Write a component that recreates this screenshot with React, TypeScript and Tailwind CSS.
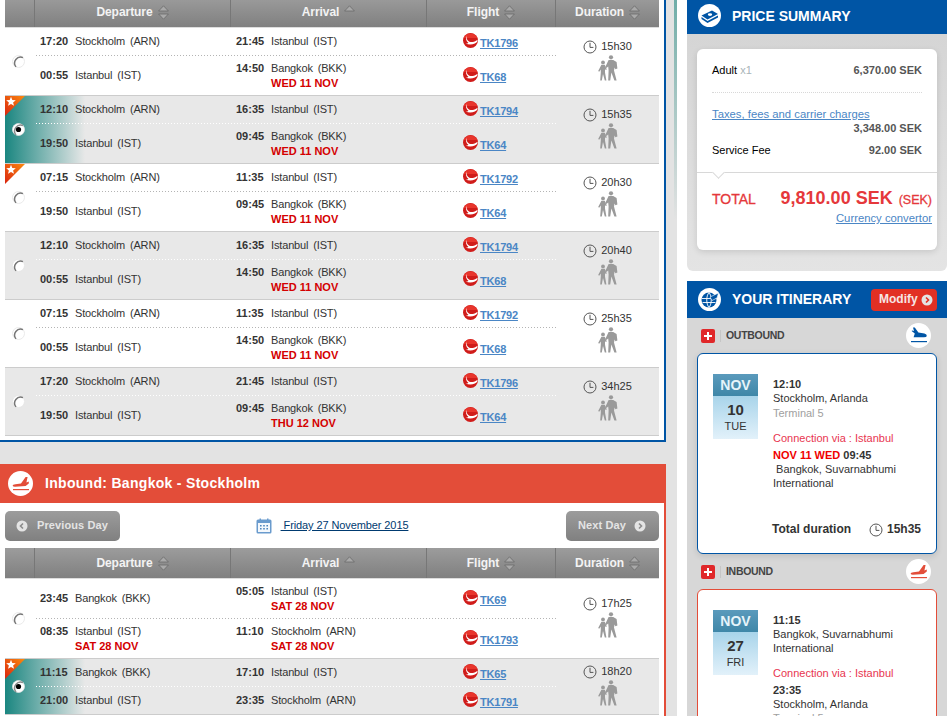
import { Fragment, type ReactNode } from "react";

type Stop = { time: string; city: string; date?: string };
type Leg = { dep: Stop; arr: Stop; flight: string };
type Flight = { legs: [Leg, Leg]; duration: string; star?: boolean; selected?: boolean };

const ARN = "Stockholm (ARN)";
const IST = "Istanbul (IST)";
const BKK = "Bangkok (BKK)";

const leg = (dt: string, dc: string, at: string, ac: string, flight: string, date?: string, depDate?: string): Leg => ({
  dep: { time: dt, city: dc, date: depDate },
  arr: { time: at, city: ac, date },
  flight,
});

const outbound: Flight[] = [
  { legs: [leg("17:20", ARN, "21:45", IST, "TK1796"), leg("00:55", IST, "14:50", BKK, "TK68", "WED 11 NOV")], duration: "15h30" },
  { legs: [leg("12:10", ARN, "16:35", IST, "TK1794"), leg("19:50", IST, "09:45", BKK, "TK64", "WED 11 NOV")], duration: "15h35", star: true, selected: true },
  { legs: [leg("07:15", ARN, "11:35", IST, "TK1792"), leg("19:50", IST, "09:45", BKK, "TK64", "WED 11 NOV")], duration: "20h30", star: true },
  { legs: [leg("12:10", ARN, "16:35", IST, "TK1794"), leg("00:55", IST, "14:50", BKK, "TK68", "WED 11 NOV")], duration: "20h40" },
  { legs: [leg("07:15", ARN, "11:35", IST, "TK1792"), leg("00:55", IST, "14:50", BKK, "TK68", "WED 11 NOV")], duration: "25h35" },
  { legs: [leg("17:20", ARN, "21:45", IST, "TK1796"), leg("19:50", IST, "09:45", BKK, "TK64", "THU 12 NOV")], duration: "34h25" },
];

const inbound: Flight[] = [
  { legs: [leg("23:45", BKK, "05:05", IST, "TK69", "SAT 28 NOV"), leg("08:35", IST, "11:10", ARN, "TK1793", "SAT 28 NOV", "SAT 28 NOV")], duration: "17h25" },
  { legs: [leg("11:15", BKK, "17:10", IST, "TK65"), leg("21:00", IST, "23:35", ARN, "TK1791")], duration: "18h20", star: true, selected: true },
];

function SortIcon({ upOnly }: { upOnly?: boolean }) {
  return (
    <svg width="11" height="15" viewBox="0 0 11 15" className="shrink-0">
      <path d="M5.5 0.8 L10.4 6 H0.6 Z" fill="#a9a9a9" stroke="#6a6a6a" strokeWidth="0.8" />
      {!upOnly && <path d="M5.5 14.2 L10.4 9 H0.6 Z" fill="#a9a9a9" stroke="#6a6a6a" strokeWidth="0.8" />}
    </svg>
  );
}

function TkLogo() {
  return (
    <svg width="15" height="15" viewBox="0 0 15 15" className="mb-[3px] shrink-0">
      <circle cx="7.5" cy="7.5" r="7.5" fill="#d01c1a" />
      <path d="M0.6 5 A7.5 7.5 0 0 1 14.4 5 Z" fill="#e8352c" />
      <path d="M3.6 2.4 C3 6.4 5.4 9.4 9.6 9 C11.4 8.8 13 8 14.6 6.8 C14.6 8.4 13.8 9.8 11.8 10.6 C8.8 11.8 5.6 11.8 2.6 10.6 C3.8 10.6 4.8 10.4 5.4 9.8 C3.2 8.4 2.4 5 3.6 2.4 Z" fill="#ffffff" />
    </svg>
  );
}

function ClockIcon() {
  return (
    <svg width="14" height="14" viewBox="0 0 14 14" className="shrink-0" fill="none" stroke="#555" strokeWidth="1">
      <circle cx="7" cy="7" r="6" />
      <path d="M7 2.8 V7.4 H10.4" />
    </svg>
  );
}

function PeopleIcon() {
  return (
    <svg width="20" height="26" viewBox="0 0 20 26" fill="#9a9a9a" className="mt-[1px]">
      <circle cx="13" cy="2.3" r="2.1" />
      <path d="M10.6 5 H15.2 L18.6 7 L19.4 13.6 L17.4 14.2 L16.6 12.6 L16 15.4 L18.6 25.6 H16.4 L13.4 17.6 L12.2 25.6 H10.2 L10.6 15.4 L10.2 11.4 L8.4 13 L7.4 11.8 Z" />
      <circle cx="5" cy="7.4" r="1.9" />
      <path d="M3.4 9.8 H6.8 L8.8 14.4 L7.6 15 L7 13.8 L7 17.6 L8.4 25.4 H6.8 L5 19 L3.8 25.4 H2.2 L2.8 17.6 L2.8 14.4 L1.2 16.8 L0.2 16 Z" />
    </svg>
  );
}

function StarBadge() {
  return (
    <svg width="21" height="20" viewBox="0 0 21 20" className="absolute left-0 top-0">
      <defs>
        <linearGradient id="badge" x1="0" y1="1" x2="1" y2="0">
          <stop offset="0" stopColor="#d9230f" />
          <stop offset="1" stopColor="#fb8a0e" />
        </linearGradient>
      </defs>
      <path d="M0 0 H20 L0 20 Z" fill="url(#badge)" />
      <path d="M6 0.8 L7.3 4 L10.8 4.2 L8.1 6.4 L9 9.8 L6 7.9 L3 9.8 L3.9 6.4 L1.2 4.2 L4.7 4 Z" fill="#fff" />
    </svg>
  );
}

function Radio({ checked }: { checked?: boolean }) {
  return (
    <svg width="13" height="13" viewBox="0 0 13 13" className="-ml-[3px]">
      <circle cx="6.5" cy="6.5" r="6" fill="#fff" stroke="#e4e4e4" strokeWidth="0.8" />
      <path d="M11 2.6 A6 6 0 0 0 4 11.9" fill="none" stroke={checked ? "#8c8c8c" : "#777"} strokeWidth="1.5" />
      {checked && <circle cx="6.5" cy="6.5" r="2.6" fill="#000" />}
    </svg>
  );
}

function StopCell({ stop }: { stop: Stop }) {
  return (
    <div className="flex items-center pl-[5px]">
      <div className="flex items-start">
        <span className="w-[35px] font-bold text-[#333]">{stop.time}</span>
        <div>
          <div className="tracking-[-0.15px] text-[#333] [word-spacing:2px]">{stop.city}</div>
          {stop.date && <div className="font-bold text-[#d40000]">{stop.date}</div>}
        </div>
      </div>
    </div>
  );
}

function FlightCell({ code }: { code: string }) {
  return (
    <div className="flex items-center gap-[2px] pl-[36px]">
      <TkLogo />
      <a className="mt-[3px] text-[11px] font-bold tracking-[-0.2px] text-[#4a86c5] underline">{code}</a>
    </div>
  );
}

function FlightRow({ flight, odd }: { flight: Flight; odd: boolean }) {
  const [first, second] = flight.legs;
  const firstTall = !!(first.arr.date || first.dep.date);
  const secondTall = !!(second.arr.date || second.dep.date);
  const bg = flight.selected
    ? "bg-[linear-gradient(to_right,#1a8680,#e8e8e8_80px)]"
    : odd
      ? "bg-white"
      : "bg-[#e8e8e8]";
  const dots = odd
    ? "bg-[linear-gradient(to_right,#b4b4b4_1px,transparent_1px)]"
    : "bg-[linear-gradient(to_right,#ffffff_1px,transparent_1px)]";
  return (
    <div className={`relative flex border-b border-[#cccccc] ${bg}`}>
      {flight.star && <StarBadge />}
      <div className="flex w-[30px] items-center justify-center">
        <Radio checked={flight.selected} />
      </div>
      <div className="w-[521px]">
        <div className={`grid grid-cols-[196px_196px_129px] bg-[length:3px_1px] bg-bottom bg-repeat-x pb-[1px] ${dots} ${firstTall ? "h-[40px]" : "h-[28px]"}`}>
          <StopCell stop={first.dep} />
          <StopCell stop={first.arr} />
          <FlightCell code={first.flight} />
        </div>
        <div className={`grid grid-cols-[196px_196px_129px] ${secondTall ? "h-[39px]" : "h-[27px]"}`}>
          <StopCell stop={second.dep} />
          <StopCell stop={second.arr} />
          <FlightCell code={second.flight} />
        </div>
      </div>
      <div className="flex w-[103px] flex-col items-center justify-center pb-[3px]">
        <div className="flex items-center gap-[4px] text-[#333]">
          <ClockIcon />
          <span>{flight.duration}</span>
        </div>
        <PeopleIcon />
      </div>
    </div>
  );
}

function FlightTable({ flights }: { flights: Flight[] }) {
  const heads = [
    { label: "Departure", w: "w-[196px]" },
    { label: "Arrival", w: "w-[196px]", upOnly: true },
    { label: "Flight", w: "w-[129px]" },
    { label: "Duration", w: "w-[103px]", last: true },
  ];
  return (
    <div>
      <div className="flex h-[31px] border-b border-[#dddddd] bg-gradient-to-b from-[#9c9c9c] to-[#808080]">
        <div className="w-[30px] border-r border-[#777]" />
        {heads.map((h) => (
          <div
            key={h.label}
            className={`flex items-center justify-center gap-[5px] ${h.w} ${h.last ? "" : "border-r border-[#777]"}`}
          >
            <span className="text-[12px] font-bold tracking-[-0.05px] text-white/90">{h.label}</span>
            <SortIcon upOnly={h.upOnly} />
          </div>
        ))}
      </div>
      {flights.map((f, i) => (
        <Fragment key={i}>
          <FlightRow flight={f} odd={i % 2 === 0} />
        </Fragment>
      ))}
    </div>
  );
}

function ChevronCircle({ left, color = "#8c8c8c" }: { left?: boolean; color?: string }) {
  return (
    <svg width="12" height="12" viewBox="0 0 12 12" className="shrink-0">
      <circle cx="6" cy="6" r="5.5" fill="#e4e4e4" />
      <path d={left ? "M7 3.5 L4.5 6 L7 8.5" : "M5 3.5 L7.5 6 L5 8.5"} fill="none" stroke={color} strokeWidth="1.6" />
    </svg>
  );
}

function LandIcon({ color, inbound: isInbound }: { color: string; inbound?: boolean }) {
  return (
    <svg width="25" height="25" viewBox="0 0 25 25" className="shrink-0">
      <circle cx="12.5" cy="12.5" r="12.5" fill="#fff" />
      <g fill={color}>
        {isInbound ? (
          <path d="M4.6 14.8 Q4.6 13.4 7.4 13.2 L13 12.6 L17.6 6 H19.6 L18.4 11.4 L20.8 10.6 V12.4 L17.6 15 L7 15.8 Q5 15.8 4.6 14.8 Z" />
        ) : (
          <path d="M7 4.4 H8.8 L12.4 9.4 L18.4 10.6 Q21 11.4 20.8 13 Q20.6 14.2 18 14.2 H7.6 L8.8 10.4 L5.6 8 L6.2 7.4 L8 8 Z" />
        )}
        <rect x="5" y="18" width="16" height="1.2" />
      </g>
    </svg>
  );
}

function CalendarIcon() {
  return (
    <svg width="16" height="16" viewBox="0 0 16 16" className="shrink-0">
      <rect x="0.5" y="1.5" width="15" height="14" rx="1.5" fill="#6a9bcd" />
      <rect x="2" y="5" width="12" height="9" fill="#f4f8fc" />
      <rect x="3.5" y="0.5" width="1.5" height="3" fill="#6a9bcd" />
      <rect x="11" y="0.5" width="1.5" height="3" fill="#6a9bcd" />
      <path d="M4 7 h1.6 v1.4 H4 z M7.2 7 h1.6 v1.4 H7.2 z M10.4 7 h1.6 v1.4 h-1.6 z M4 10 h1.6 v1.4 H4 z M7.2 10 h1.6 v1.4 H7.2 z M10.4 10 h1.6 v1.4 h-1.6 z" fill="#4f86bd" />
    </svg>
  );
}

function MoneyIcon() {
  return (
    <svg width="23" height="23" viewBox="0 0 23 23" className="mb-[4px] shrink-0">
      <circle cx="11.5" cy="11.5" r="11.5" fill="#fff" />
      <path d="M3.5 11.5 L14 6.5 L20 10 L9.5 15.5 Z" fill="#0055a5" />
      <path d="M3.5 13 L9.5 17 L20 11.5 V13.5 L9.5 19 L3.5 15 Z" fill="#0055a5" />
      <ellipse cx="12" cy="10.6" rx="2.2" ry="1.3" fill="#fff" />
    </svg>
  );
}

function GlobeIcon() {
  return (
    <svg width="23" height="23" viewBox="0 0 23 23" className="shrink-0">
      <circle cx="11.5" cy="11.5" r="11.5" fill="#fff" />
      <circle cx="11" cy="12" r="7.5" fill="#0055a5" />
      <path d="M4 10.5 H18 M4.5 14.5 H17.5 M11 4.5 C8 8 8 16 11 19.5 M11 4.5 C14 8 14 16 11 19.5" fill="none" stroke="#fff" strokeWidth="0.9" />
      <path d="M12 9 L20.5 5 L19 10 L14 12.5 Z" fill="#0055a5" stroke="#fff" strokeWidth="0.6" />
    </svg>
  );
}

function PlusButton() {
  return (
    <div className="flex h-[14px] w-[14px] items-center justify-center rounded-[2px] bg-[#e0282a]">
      <svg width="8" height="8" viewBox="0 0 8 8">
        <path d="M3 0 H5 V3 H8 V5 H5 V8 H3 V5 H0 V3 H3 Z" fill="#fff" />
      </svg>
    </div>
  );
}

function BoundRow({ label, icon }: { label: string; icon: ReactNode }) {
  return (
    <div className="-mx-[10px] flex h-[35px] items-center pl-[14px] pr-[16px]">
      <PlusButton />
      <div className="ml-[5px] h-[12px] w-px bg-[#c6c6c6]" />
      <span className="ml-[5px] flex-1 text-[10.5px] font-bold tracking-[-0.3px] text-[#444]">{label}</span>
      {icon}
    </div>
  );
}

function DateTile({ day, weekday }: { day: string; weekday: string }) {
  return (
    <div className="h-[65px] w-[45px] shrink-0 text-center">
      <div className="flex h-[22px] items-center justify-center bg-gradient-to-b from-[#5a9abc] to-[#3f87a8] text-[14px] font-bold text-[#e6f4fa]">
        NOV
      </div>
      <div className="h-[43px] bg-gradient-to-b from-[#a8d4ea] to-[#e2f1fa] pt-[6px] text-[#333]">
        <div className="text-[15px] font-bold leading-[16px]">{day}</div>
        <div className="mt-[1px] text-[11px] leading-[14px]">{weekday}</div>
      </div>
    </div>
  );
}

export default function App() {
  return (
    <div className="flex h-[716px] w-[947px] overflow-hidden bg-white font-['Liberation_Sans',Arial,sans-serif] text-[11px] leading-[15px]">
      {/* left column */}
      <div className="flex w-[666px] shrink-0 flex-col bg-[#e3e3e3]">
        <section className="-mt-[3px] border-b-2 border-r-2 border-[#0055a5] bg-white px-[5px] pb-[4px]">
          <FlightTable flights={outbound} />
        </section>

        <section className="mt-[22px] flex-1 border-r-2 border-[#e34d39] bg-white">
          <div className="flex h-[39px] items-center bg-[#e34d39] pl-[8px]">
            <LandIcon color="#e34d39" inbound />
            <h2 className="ml-[12px] text-[14px] font-bold tracking-[0.3px] text-white">Inbound: Bangkok - Stockholm</h2>
          </div>
          <div className="px-[5px]">
            <div className="flex h-[45px] items-center">
              <button className="flex h-[30px] w-[115px] items-center gap-[9px] rounded-[5px] bg-gradient-to-b from-[#9c9c9c] to-[#808080] pl-[11px] text-[11px] font-bold tracking-[0.1px] text-[#e4e4e4]">
                <ChevronCircle left />
                Previous Day
              </button>
              <div className="flex flex-1 items-center justify-center gap-[9px] pr-[22px]">
                <CalendarIcon />
                <a className="whitespace-pre tracking-[-0.1px] text-[#003a70] underline"> Friday 27 November 2015</a>
              </div>
              <button className="flex h-[30px] w-[93px] items-center justify-between rounded-[5px] bg-gradient-to-b from-[#9c9c9c] to-[#808080] pl-[12px] pr-[13px] text-[11px] font-bold tracking-[0.1px] text-[#e4e4e4]">
                Next Day
                <ChevronCircle />
              </button>
            </div>
            <FlightTable flights={inbound} />
          </div>
        </section>
      </div>

      {/* gutter */}
      <div className="flex w-[11px] shrink-0 bg-[#e3e3e3]">
        <div className="ml-[8px] h-[220px] w-[3px] bg-gradient-to-b from-[#6fada8] to-[#e3e3e3]" />
      </div>
      <div className="w-[10px] shrink-0" />

      {/* right column */}
      <aside className="flex w-[260px] shrink-0 flex-col">
        <div className="flex h-[34px] shrink-0 items-center bg-[#0055a5] pl-[11px]">
          <MoneyIcon />
          <h2 className="mb-[2px] ml-[11px] text-[14px] font-bold text-white">PRICE SUMMARY</h2>
        </div>
        <div className="h-[237px] shrink-0 rounded-b-[6px] bg-gradient-to-b from-[#d5d5d5] to-[#e4e4e4] px-[10px] pt-[15px]">
          <div className="h-[201px] rounded-[6px] bg-white shadow-[0_2px_6px_rgba(0,0,0,0.12)]">
            <div className="flex justify-between px-[15px] pt-[14px]">
              <span className="text-black">
                Adult <span className="text-[#a8b4b8]">x1</span>
              </span>
              <span className="font-bold text-[#555]">6,370.00 SEK</span>
            </div>
            <div className="mx-[15px] mt-[14px] border-t border-dotted border-[#d8d8d8]" />
            <a className="mx-[15px] mt-[14px] block text-[11.3px] leading-[14px] text-[#4a86c5] underline">Taxes, fees and carrier charges</a>
            <div className="px-[15px] text-right font-bold text-[#555]">3,348.00 SEK</div>
            <div className="mt-[7px] flex justify-between px-[15px]">
              <span className="text-black">Service Fee</span>
              <span className="font-bold text-[#555]">92.00 SEK</span>
            </div>
            <div className="relative mt-[14px] border-t border-[#d8d8d8]">
              <div className="absolute left-[17px] top-[-5px] h-[9px] w-[9px] rotate-45 border-b border-r border-[#d8d8d8] bg-white" />
            </div>
            <div className="flex items-baseline pl-[15px] pr-[5px] pt-[14px] text-[#e5383b]">
              <span className="text-[14px] [-webkit-text-stroke:0.3px_#e5383b]">TOTAL</span>
              <span className="ml-auto text-[18px] font-bold leading-[22px]">9,810.00 SEK</span>
              <span className="ml-[6px] text-[12.5px] [-webkit-text-stroke:0.3px_#e5383b]">(SEK)</span>
            </div>
            <a className="mr-[5px] mt-[2px] block text-right text-[11.3px] text-[#4a86c5] underline">Currency convertor</a>
          </div>
        </div>

        <div className="mt-[10px] flex h-[37px] shrink-0 items-center bg-[#0055a5] pl-[11px] pr-[10px]">
          <GlobeIcon />
          <h2 className="ml-[11px] flex-1 text-[14px] font-bold text-white">YOUR ITINERARY</h2>
          <button className="flex h-[22px] w-[66px] items-center gap-[3px] rounded-[4px] bg-[#e23024] pl-[8px] text-[12px] font-bold text-[#f6e6e4]">
            Modify
            <ChevronCircle color="#e23024" />
          </button>
        </div>
        <div className="flex-1 bg-[#d7d7d7] px-[10px]">
          <BoundRow label="OUTBOUND" icon={<LandIcon color="#0055a5" />} />
          <div className="flex h-[201px] flex-col rounded-[6px] border border-[#0055a5] bg-white pl-[15px] pr-[15px] pt-[20px] shadow-[0_2px_6px_rgba(0,0,0,0.12)]">
            <div className="flex gap-[15px] leading-[14px] text-[#333]">
              <DateTile day="10" weekday="TUE" />
              <div className="pt-[3px]">
                <div className="font-bold">12:10</div>
                <div>Stockholm, Arlanda</div>
                <div className="mt-[1px] text-[#a0a0a0]">Terminal 5</div>
                <div className="mt-[11px] text-[#e8354f]">Connection via : Istanbul</div>
                <div className="mt-[3px] font-bold">
                  <span className="text-[#f00000]">NOV 11 WED</span> 09:45
                </div>
                <div className="whitespace-pre"> Bangkok, Suvarnabhumi</div>
                <div>International</div>
              </div>
            </div>
            <div className="mt-[32px] flex items-center pl-[59px] text-[12px] font-bold text-[#333]">
              <span>Total duration</span>
              <div className="ml-auto flex items-center gap-[4px]">
                <ClockIcon />
                <span>15h35</span>
              </div>
            </div>
          </div>
          <BoundRow label="INBOUND" icon={<LandIcon color="#e34d39" inbound />} />
          <div className="h-[200px] rounded-[6px] border border-[#e34d39] bg-white pl-[15px] pr-[15px] pt-[20px]">
            <div className="flex gap-[15px] leading-[14px] text-[#333]">
              <DateTile day="27" weekday="FRI" />
              <div className="pt-[3px]">
                <div className="font-bold">11:15</div>
                <div>Bangkok, Suvarnabhumi</div>
                <div>International</div>
                <div className="mt-[11px] text-[#e8354f]">Connection via : Istanbul</div>
                <div className="mt-[3px] font-bold">23:35</div>
                <div>Stockholm, Arlanda</div>
                <div className="text-[#a0a0a0]">Terminal 5</div>
              </div>
            </div>
          </div>
        </div>
      </aside>
    </div>
  );
}
